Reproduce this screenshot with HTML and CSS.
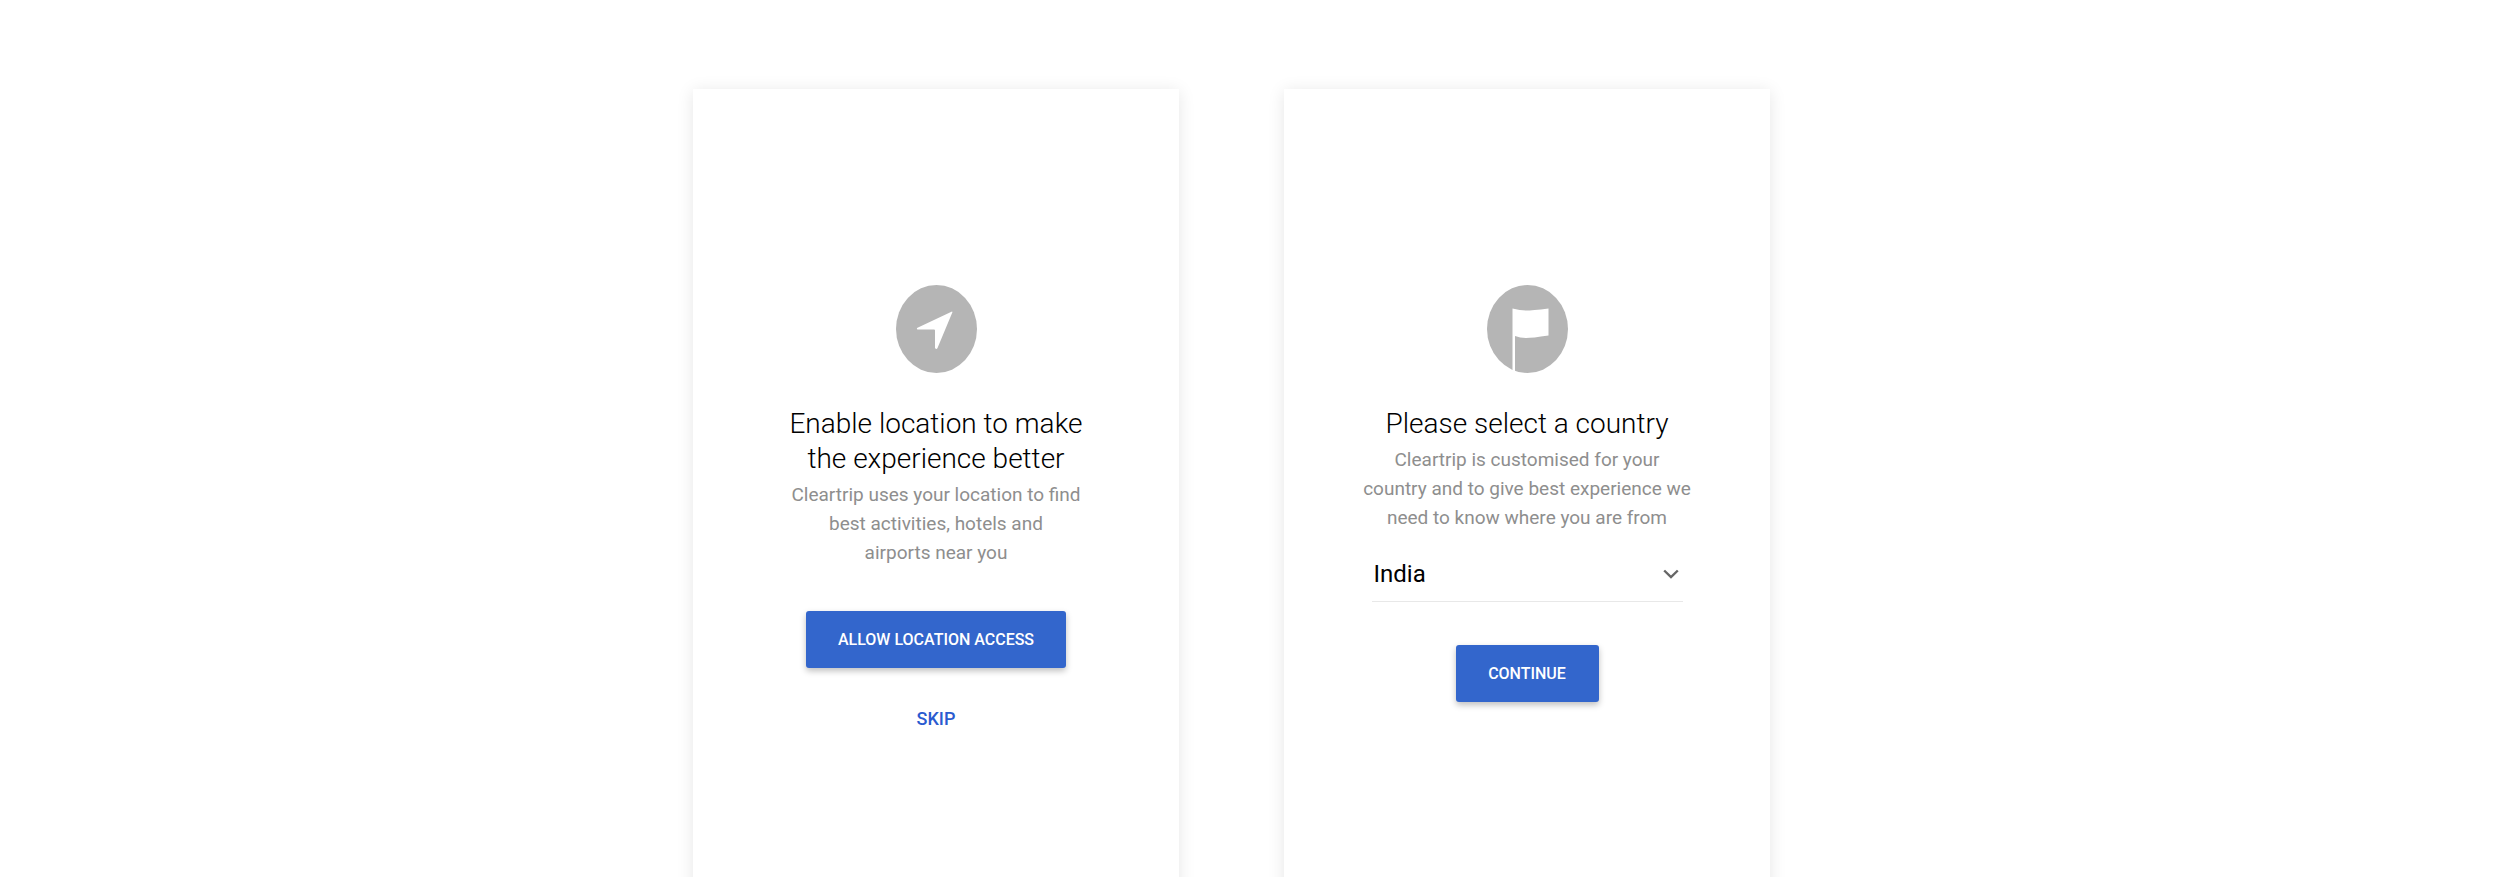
FILE: index.html
```html
<!DOCTYPE html>
<html lang="en">
<head>
  <meta charset="UTF-8" />
  <title>Cleartrip onboarding</title>
  <link rel="stylesheet" href="styles.css">
</head>
<body>
  <div class="screens">
    <div class="card">
      <svg class="icon" viewBox="0 0 81 88" aria-hidden="true">
        <ellipse cx="40.5" cy="44" rx="40.5" ry="44" fill="#b5b5b5" />
        <path d="M56 26.5 L21 43 Q20.300 44.500 22 44.500 L38 44.500 Q39 44.500 39 45.500 L39 63 Q40.500 65 41.500 63 L56.500 27 Z" fill="#fff" />
      </svg>
      <h2>Enable location to make<br>the experience better</h2>
      <p class="sub">Cleartrip uses your location to find<br>best activities, hotels and<br>airports near you</p>
      <button class="btn btn-allow">ALLOW LOCATION ACCESS</button>
      <a class="skip" href="#">SKIP</a>
    </div>

    <div class="card">
      <svg class="icon" viewBox="0 0 81 88" aria-hidden="true">
        <ellipse cx="40.500" cy="44" rx="40.500" ry="44" fill="#b5b5b5" />
        <path d="M25.500 23.500 Q33 25.500 39 25.500 Q45 25.500 61.500 23.500 L61.500 50.500 Q45 53 39 53 Q33 53 28 51 L28 86 L25.500 86 Z" fill="#fff" />
      </svg>
      <h2 class="title-country">Please select a country</h2>
      <p class="sub">Cleartrip is customised for your<br>country and to give best experience we<br>need to know where you are from</p>
      <div class="select">
        <span>India</span>
        <svg class="chevron" viewBox="0 0 16 10" aria-hidden="true">
          <path d="M1.200 1.500 L8 8 L14.800 1.500" fill="none" stroke="#666" stroke-width="2.400" />
        </svg>
      </div>
      <button class="btn btn-continue">CONTINUE</button>
    </div>
  </div>
</body>
</html>
```

FILE: styles.css
```css
html, body {
  height: 100%;
}
body {
  margin: 0;
  overflow: hidden;
  background: #fff;
  font-family: Roboto, "Liberation Sans", sans-serif;
}
.screens {
  display: flex;
  gap: 105px;
  padding: 89px 0 0 693px;
}
.card {
  width: 486px;
  height: 900px;
  flex: none;
  box-sizing: border-box;
  padding-top: 196px;
  display: flex;
  flex-direction: column;
  align-items: center;
  background: #fff;
  box-shadow: 0 2px 16px rgba(0,0,0,0.10);
}
.icon {
  display: block;
  width: 81px;
  height: 88px;
}
h2 {
  margin: 33px 0 0 0;
  font-size: 28px;
  font-weight: 300;
  line-height: 35px;
  color: #000;
  text-align: center;
}
.sub {
  margin: 4px 0 0 0;
  font-size: 19px;
  line-height: 29px;
  color: #8e8e8e;
  text-align: center;
}
.btn {
  display: block;
  height: 57px;
  padding: 0;
  border: 0;
  border-radius: 3px;
  background: #3366cc;
  color: #fff;
  font-family: inherit;
  font-size: 16px;
  font-weight: 500;
  box-shadow: 0 3px 6px rgba(0,0,0,0.25);
}
.btn-allow {
  width: 260px;
  margin-top: 44px;
}
.btn-continue {
  width: 143px;
  margin-top: 43px;
}
.skip {
  margin-top: 40px;
  font-size: 18px;
  font-weight: 500;
  color: #2a5bd0;
  text-decoration: none;
}
.select {
  width: 311px;
  height: 56px;
  margin-top: 14px;
  box-sizing: border-box;
  padding: 0 4px 0 2px;
  display: flex;
  align-items: center;
  justify-content: space-between;
  border-bottom: 1px solid #e8e8e8;
  font-size: 24px;
  color: #000;
}
.chevron {
  width: 16px;
  height: 10px;
}
```
